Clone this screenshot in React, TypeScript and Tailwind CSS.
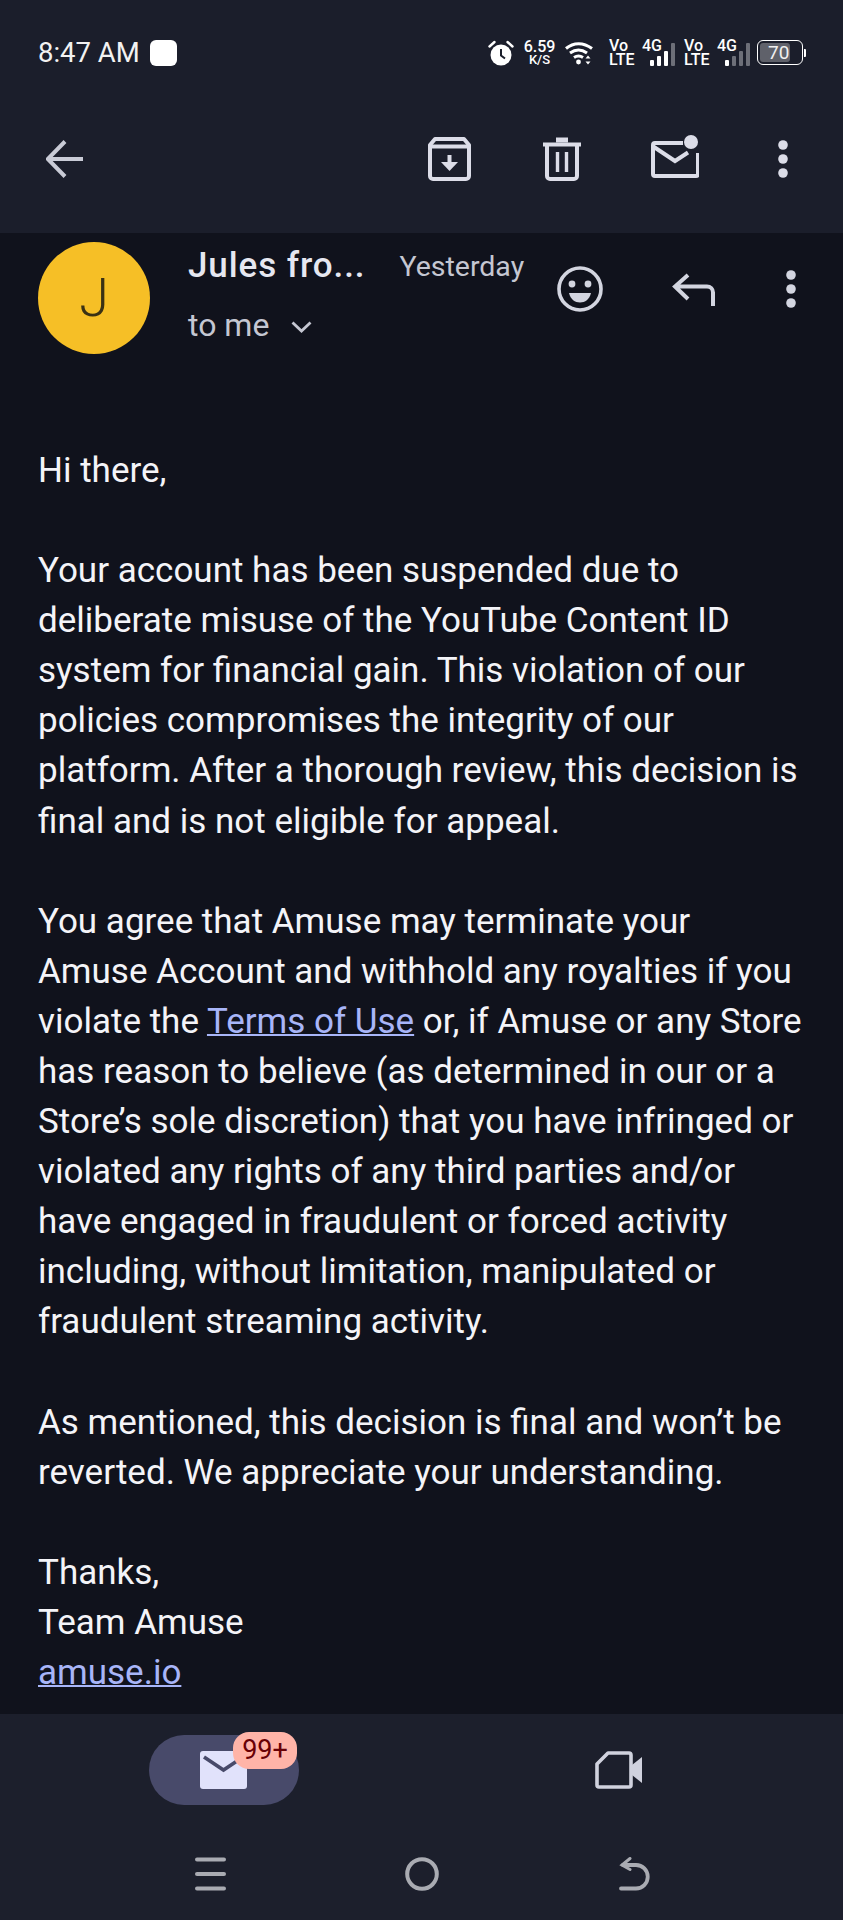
const font = { fontFamily: '"Roboto", "Liberation Sans", sans-serif' };

function Alarm() {
  return (
    <svg width="26" height="26" viewBox="0 0 26 26" fill="none">
      <circle cx="13" cy="15" r="10.5" fill="#fff" />
      <path d="M13 9v6.5l4 3" stroke="#1b1e2b" strokeWidth="2" fill="none" />
      <path d="M1.5 6.5 6.5 2M24.5 6.5 19.5 2" stroke="#fff" strokeWidth="2.4" strokeLinecap="round" />
    </svg>
  );
}

function Wifi() {
  return (
    <svg width="28" height="24" viewBox="0 0 28 24" fill="none">
      <path d="M1 7.5C8.5 1 18.5 1 27 7.5" stroke="#fff" strokeWidth="3" />
      <path d="M5 12c5.5-4 11.5-4 17 0" stroke="#fff" strokeWidth="3" />
      <path d="M9 16.5c3-2 6-2 9 0" stroke="#fff" strokeWidth="3" />
      <circle cx="13.5" cy="21" r="2.4" fill="#fff" />
      <path d="M23 14.5l2.5 3h-5zM23 23.5l2.5-3h-5z" fill="#fff" />
    </svg>
  );
}

function VoLte() {
  return (
    <div className="flex w-[24px] flex-col text-[16px] font-medium leading-[14px] text-white">
      <span>Vo</span>
      <span>LTE</span>
    </div>
  );
}

function Signal({ strong }: { strong: number }) {
  const heights = [6, 10, 15, 23];
  return (
    <div className="relative h-[26px] w-[33px]">
      <span className="absolute left-0 top-[-2px] text-[16px] font-medium leading-[16px] text-white">4G</span>
      <div className="absolute bottom-0 right-0 flex items-end gap-[3px]">
        {heights.map((h, i) => (
          <div
            key={i}
            className="w-[4px] rounded-[1px]"
            style={{ height: h, backgroundColor: i < strong ? '#ffffff' : '#6d6f78' }}
          />
        ))}
      </div>
    </div>
  );
}

function Battery() {
  return (
    <div className="flex items-center gap-[1px]">
      <div className="flex h-[25px] w-[46px] items-center rounded-[6px] border-[1.5px] border-white p-[2px]">
        <div className="flex h-full w-[30px] items-center rounded-[3px] bg-[#5f616a] pl-[8px] text-[19px] leading-none text-[#f0f0f0]">
          70
        </div>
      </div>
      <div className="h-[8px] w-[2px] rounded-r-[1px] bg-white" />
    </div>
  );
}

function BackArrow() {
  return (
    <svg width="38" height="38" viewBox="0 0 38 38" fill="none">
      <path d="M37 19H2M19 1.5 1.8 19 19 36.5" stroke="#c9cbd6" strokeWidth="4" />
    </svg>
  );
}

function Archive() {
  return (
    <svg width="43" height="44" viewBox="0 0 43 44" fill="none" stroke="#dcdde8" strokeWidth="4">
      <path d="M7 2h29l5 6v31a3 3 0 0 1-3 3H5a3 3 0 0 1-3-3V8z" strokeLinejoin="round" />
      <path d="M2 9.5h39" />
      <path d="M21.5 18v10" strokeWidth="4" />
      <path d="M13 25h17l-8.500 9z" fill="#dcdde8" stroke="none" />
    </svg>
  );
}

function Trash() {
  return (
    <svg width="38" height="44" viewBox="0 0 38 44" fill="none" stroke="#dcdde8" strokeWidth="4">
      <path d="M0 7.5h38" />
      <path d="M13 3h12" strokeWidth="5" />
      <path d="M4 8v31a3 3 0 0 0 3 3h24a3 3 0 0 0 3-3V8" />
      <path d="M14.5 15v20M23.5 15v20" strokeWidth="3.4" />
    </svg>
  );
}

function MailDot() {
  return (
    <svg width="48" height="44" viewBox="0 0 48 44" fill="none" stroke="#dcdde8" strokeWidth="4">
      <path d="M32 8H4a2 2 0 0 0-2 2v29a2 2 0 0 0 2 2h41a2 2 0 0 0 2-2V18" strokeLinejoin="round" />
      <path d="M3 12l21 14 13-8.5" />
      <circle cx="40" cy="7" r="7" fill="#dcdde8" stroke="none" />
    </svg>
  );
}

function Dots({ color = '#dcdde8' }: { color?: string }) {
  return (
    <svg width="10" height="38" viewBox="0 0 10 38">
      <circle cx="5" cy="5" r="4.8" fill={color} />
      <circle cx="5" cy="19" r="4.8" fill={color} />
      <circle cx="5" cy="33" r="4.8" fill={color} />
    </svg>
  );
}

function Smiley() {
  return (
    <svg width="46" height="46" viewBox="0 0 46 46" fill="none">
      <circle cx="23" cy="23" r="21" stroke="#d3d5e0" strokeWidth="3.6" />
      <circle cx="15" cy="18" r="3.4" fill="#d3d5e0" />
      <circle cx="31" cy="18" r="3.4" fill="#d3d5e0" />
      <path d="M12 27h22c-1.5 6.5-6 9.5-11 9.5S13.500 33.500 12 27z" fill="#d3d5e0" />
    </svg>
  );
}

function Reply() {
  return (
    <svg width="44" height="34" viewBox="0 0 44 34" fill="none">
      <path d="M16 2 3 13.500 16 26M3 13.500h32a6 6 0 0 1 6 6V33" stroke="#d3d5e0" strokeWidth="4" />
    </svg>
  );
}

function Chevron() {
  return (
    <svg width="21" height="12" viewBox="0 0 21 12" fill="none">
      <path d="M1.500 1.500 10.500 10 19.500 1.500" stroke="#c5c7d2" strokeWidth="2.8" />
    </svg>
  );
}

function MailFilled() {
  return (
    <svg width="47" height="38" viewBox="0 0 47 38" fill="none">
      <rect width="47" height="38" rx="3" fill="#e1e2fb" />
      <path d="M4 6 23.500 19 43 6" stroke="#484a6a" strokeWidth="3.6" />
    </svg>
  );
}

function Video() {
  return (
    <svg width="48" height="38" viewBox="0 0 48 38" fill="none">
      <path
        d="M13 2h21a2 2 0 0 1 2 2v30a2 2 0 0 1-2 2H4a2 2 0 0 1-2-2V13z"
        stroke="#d0d2de"
        strokeWidth="3.6"
        strokeLinejoin="round"
      />
      <path d="M37 14 47 6v26L37 24z" fill="#d0d2de" />
    </svg>
  );
}

function MenuIcon() {
  return (
    <svg width="31" height="34" viewBox="0 0 31 34">
      <rect y="0.500" width="31" height="4" rx="2" fill="#a9abb2" />
      <rect y="15" width="31" height="4" rx="2" fill="#a9abb2" />
      <rect y="29.500" width="31" height="4" rx="2" fill="#a9abb2" />
    </svg>
  );
}

function HomeIcon() {
  return (
    <svg width="34" height="34" viewBox="0 0 34 34" fill="none">
      <circle cx="17" cy="17" r="14.800" stroke="#a9abb2" strokeWidth="4" />
    </svg>
  );
}

function NavBack() {
  return (
    <svg width="31" height="34" viewBox="0 0 31 34" fill="none">
      <path d="M2 31.500h15a11.500 11.500 0 0 0 0-23.500H4" stroke="#a9abb2" strokeWidth="3.800" strokeLinecap="round" />
      <path d="M11 1.500 3 8l8 4.500" stroke="#a9abb2" strokeWidth="3" fill="none" strokeLinecap="round" />
    </svg>
  );
}

export default function App() {
  return (
    <div className="flex h-[1920px] w-[843px] flex-col overflow-hidden bg-[#10121c]" style={font}>
      <header className="h-[233px] shrink-0 bg-[#1b1e2b]">
        <div className="flex h-[106px] items-center pb-[1px] pl-[38px] pr-[37px]">
          <span className="text-[27.500px] leading-none text-[#f2f2f2]">8:47 AM</span>
          <div className="ml-[10px] h-[26px] w-[27px] rounded-[6px] bg-white" />
          <div className="ml-auto flex items-center">
            <Alarm />
            <div className="ml-[9px] flex w-[33px] flex-col items-center text-white">
              <span className="text-[16px] font-medium leading-[15px]">6.59</span>
              <span className="text-[13px] font-medium leading-[12px]">K/S</span>
            </div>
            <div className="ml-[9px]"><Wifi /></div>
            <div className="ml-[16px]"><VoLte /></div>
            <div className="ml-[9px]"><Signal strong={3} /></div>
            <div className="ml-[9px]"><VoLte /></div>
            <div className="ml-[9px]"><Signal strong={1} /></div>
            <div className="ml-[7px]"><Battery /></div>
          </div>
        </div>
        <div className="flex h-[106px] items-center pl-[46px]">
          <BackArrow />
          <div className="ml-[344px]"><Archive /></div>
          <div className="ml-[72px]"><Trash /></div>
          <div className="ml-[70px] mt-[-5px]"><MailDot /></div>
          <div className="ml-[79px]"><Dots /></div>
        </div>
      </header>

      <main className="flex-1 pl-[38px] pr-[38px] pt-[9px]">
        <div className="flex h-[112px]">
          <div className="flex h-[112px] w-[112px] shrink-0 items-center justify-center rounded-full bg-[#f6bf26] text-[54px] font-light leading-none text-[#3a3114]">
            J
          </div>
          <div className="ml-[38px] w-[336px] shrink-0">
            <div className="flex items-center pt-[2px]">
              <span className="shrink-0 whitespace-nowrap text-[35px] font-medium leading-[42px] tracking-[0.9px] text-[#e6e7f0]">Jules fro...</span>
              <span className="ml-[34px] mt-[2px] shrink-0 whitespace-nowrap text-[28.500px] leading-[42px] text-[#c5c7d2]">Yesterday</span>
            </div>
            <div className="mt-[18px] flex items-center">
              <span className="text-[32px] leading-[38px] text-[#c5c7d2]">to me</span>
              <span className="ml-[22px] mt-[4px]"><Chevron /></span>
            </div>
          </div>
          <div className="ml-[33px] mt-[24px]"><Smiley /></div>
          <div className="ml-[69px] mt-[31px]"><Reply /></div>
          <div className="ml-[70px] mt-[28px]"><Dots color="#d3d5e0" /></div>
        </div>

        <div className="mt-[92px] text-[35px] leading-[50.100px] text-[#f4f4f8]">
          <p>Hi there,</p>
          <p className="mt-[50px]">
            Your account has been suspended due to deliberate misuse of the YouTube Content ID system for financial gain. This violation of our policies compromises the integrity of our platform. After a thorough review, this decision is final and is not eligible for appeal.
          </p>
          <p className="mt-[50px]">
            You agree that Amuse may terminate your Amuse Account and withhold any royalties if you violate the{' '}
            <a className="text-[#a8b5f8] underline decoration-2">Terms of Use</a> or, if Amuse or any Store has reason to believe (as determined in our or a Store’s sole discretion) that you have infringed or violated any rights of any third parties and/or have engaged in fraudulent or forced activity including, without limitation, manipulated or fraudulent streaming activity.
          </p>
          <p className="mt-[50px]">
            As mentioned, this decision is final and won’t be reverted. We appreciate your understanding.
          </p>
          <p className="mt-[50px]">
            Thanks,<br />Team Amuse<br />
            <a className="text-[#a8b5f8] underline decoration-2">amuse.io</a>
          </p>
        </div>
      </main>

      <footer className="h-[206px] shrink-0 bg-[#1c1f2c]">
        <div className="flex h-[128px] items-start pl-[149px] pt-[21px]">
          <div className="relative flex h-[70px] w-[150px] items-center justify-center rounded-full bg-[#484a6a]">
            <div className="ml-[-2px]"><MailFilled /></div>
            <div className="absolute left-[84px] top-[-3px] flex h-[37px] w-[64px] items-center justify-center rounded-[16px] bg-[#ffb4a8] text-[27px] leading-none text-[#690005]">
              99+
            </div>
          </div>
          <div className="ml-[296px] mt-[16px]"><Video /></div>
        </div>
        <div className="flex items-start pl-[195px] pt-[15px]">
          <MenuIcon />
          <div className="ml-[179px]"><HomeIcon /></div>
          <div className="ml-[180px]"><NavBack /></div>
        </div>
      </footer>
    </div>
  );
}
